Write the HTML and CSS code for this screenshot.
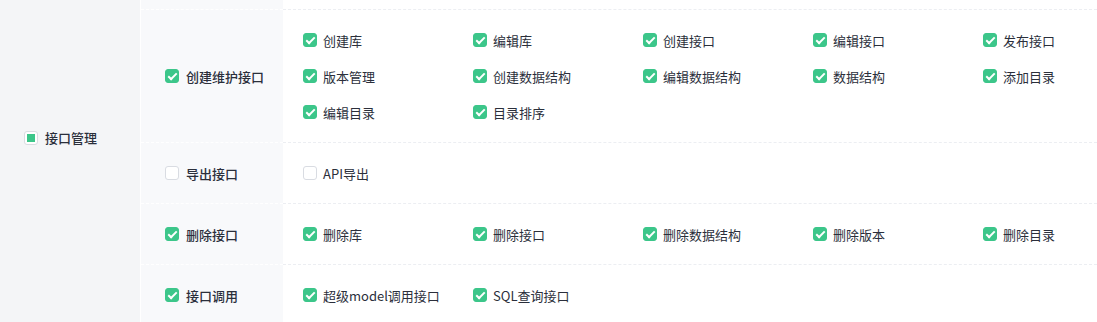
FILE: index.html
```html
<!DOCTYPE html>
<html lang="zh-CN">
<head>
    <meta charset="UTF-8">
    <title>权限设置</title>
    <link rel="stylesheet" href="styles.css">
</head>
<body>
    <div class="perm">
        <div class="module">
            <span class="box half"></span>
            <span class="module-name">接口管理</span>
        </div>
        <div class="groups">
            <!-- row above, scrolled out of view -->
            <div class="group">
                <div class="group-name"></div>
                <div class="group-items"></div>
            </div>

            <div class="group">
                <label class="group-name"><span class="box on"></span>创建维护接口</label>
                <div class="group-items">
                    <label class="item"><span class="box on"></span>创建库</label>
                    <label class="item"><span class="box on"></span>编辑库</label>
                    <label class="item"><span class="box on"></span>创建接口</label>
                    <label class="item"><span class="box on"></span>编辑接口</label>
                    <label class="item"><span class="box on"></span>发布接口</label>
                    <label class="item"><span class="box on"></span>版本管理</label>
                    <label class="item"><span class="box on"></span>创建数据结构</label>
                    <label class="item"><span class="box on"></span>编辑数据结构</label>
                    <label class="item"><span class="box on"></span>数据结构</label>
                    <label class="item"><span class="box on"></span>添加目录</label>
                    <label class="item"><span class="box on"></span>编辑目录</label>
                    <label class="item"><span class="box on"></span>目录排序</label>
                </div>
            </div>

            <div class="group">
                <label class="group-name"><span class="box"></span>导出接口</label>
                <div class="group-items">
                    <label class="item"><span class="box"></span>API导出</label>
                </div>
            </div>

            <div class="group">
                <label class="group-name"><span class="box on"></span>删除接口</label>
                <div class="group-items">
                    <label class="item"><span class="box on"></span>删除库</label>
                    <label class="item"><span class="box on"></span>删除接口</label>
                    <label class="item"><span class="box on"></span>删除数据结构</label>
                    <label class="item"><span class="box on"></span>删除版本</label>
                    <label class="item"><span class="box on"></span>删除目录</label>
                </div>
            </div>

            <div class="group">
                <label class="group-name"><span class="box on"></span>接口调用</label>
                <div class="group-items">
                    <label class="item"><span class="box on"></span>超级model调用接口</label>
                    <label class="item"><span class="box on"></span>SQL查询接口</label>
                </div>
            </div>
        </div>
    </div>
</body>
</html>
```

FILE: styles.css
```css
body {
    margin: 0;
    background-color: #fff;
    font-family: "Noto Sans CJK SC", "Liberation Sans", sans-serif;
    font-size: 13px;
    color: #2b2f3b;
}
.perm {
    display: flex;
    margin-top: -51px;
}
.module {
    width: 141px;
    flex-shrink: 0;
    background-color: #f4f5f7;
    border-right: 1px solid #fff;
    display: flex;
    align-items: center;
    padding-left: 24px;
    box-sizing: border-box;
}
.module-name {
    margin-left: 7px;
    font-weight: 500;
}
.groups {
    flex: 1;
    min-width: 0;
    display: flex;
    flex-direction: column;
}
.group {
    display: flex;
}
.group-name {
    width: 142px;
    flex-shrink: 0;
    box-sizing: border-box;
    background-color: #f8f9fb;
    border-bottom: 1px dashed #fff;
    display: flex;
    align-items: center;
    padding-left: 24px;
    font-weight: 500;
}
.group-name .box {
    margin-right: 7px;
}
.group-items {
    flex: 1;
    min-width: 0;
    display: grid;
    grid-template-columns: repeat(4, 170px) 1fr;
    grid-auto-rows: 36px;
    align-content: start;
    padding: 12px 0 12px 20px;
    min-height: 36px;
    border-bottom: 1px dashed #eceef2;
}
.item {
    display: flex;
    align-items: center;
    white-space: nowrap;
}
.item .box {
    margin-right: 6px;
}
.box {
    width: 14px;
    height: 14px;
    box-sizing: border-box;
    border: 1px solid #d9dce2;
    border-radius: 3px;
    background-color: #fff;
    flex-shrink: 0;
    position: relative;
}
.box.on {
    border-color: #3cc68a;
    background-color: #3cc68a;
}
.box.on::after {
    content: "";
    position: absolute;
    left: 4px;
    top: 1px;
    width: 3px;
    height: 7px;
    border: solid #fff;
    border-width: 0 2px 2px 0;
    transform: rotate(45deg);
}
.box.half::after {
    content: "";
    position: absolute;
    left: 2px;
    top: 2px;
    width: 8px;
    height: 8px;
    background-color: #3cc68a;
}
```
